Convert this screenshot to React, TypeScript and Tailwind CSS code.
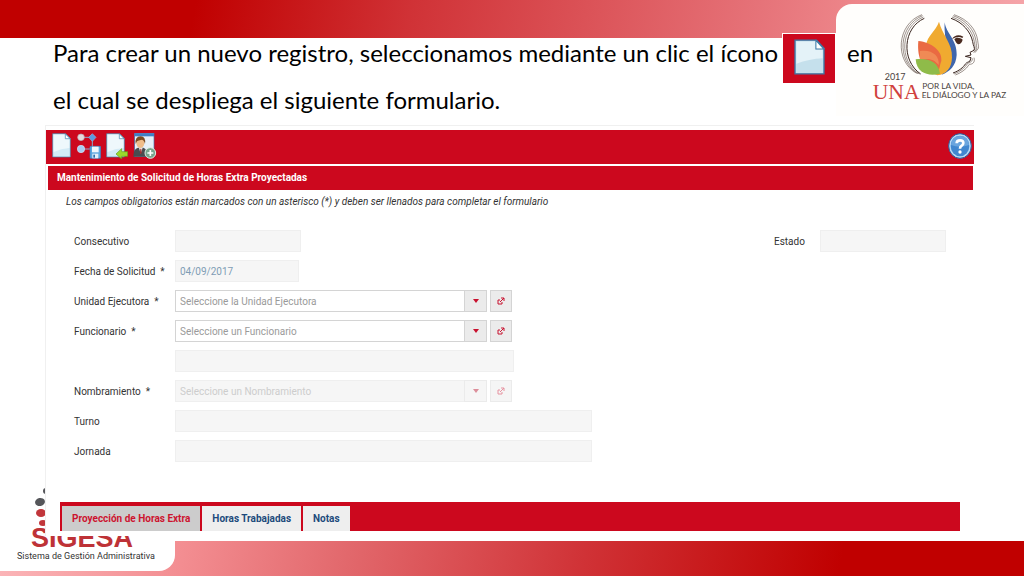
import React, { useState } from "react";

const tabs = ["Proyección de Horas Extra", "Horas Trabajadas", "Notas"];

const fieldClass =
  "h-[22px] border border-[#efefef] bg-[#f6f6f6] px-1 text-[10px] text-[#7f9db5] outline-none";

const PageShape = () => (
  <>
    <path d="M1 1 H40 L54 15 V71 H1 Z" fill="#d3ebf6" stroke="#4384ab" strokeWidth="2" />
    <path d="M4 4 H38 V18 H51 V44 Q26 46 4 56 Z" fill="#eef8fc" />
    <path d="M39 2 L53 16 H39 Z" fill="#ffffff" stroke="#4384ab" strokeWidth="2" />
  </>
);

const PageIcon = () => (
  <svg viewBox="-1 -1 60 78" className="h-[26px] w-5" aria-hidden="true">
    <PageShape />
  </svg>
);

const NodesIcon = () => (
  <svg viewBox="0 0 72 78" className="h-[26px] w-6" aria-hidden="true">
    <path d="M12 13 H46 V48 H12" fill="none" stroke="#8fa9c9" strokeWidth="3" />
    <circle cx="12" cy="13" r="10" fill="#e6dadd" stroke="#b9a9b4" strokeWidth="2" />
    <path d="M46 2 L57 13 L46 25 L35 13 Z" fill="#5c9be0" stroke="#8ab9e8" strokeWidth="2" />
    <circle cx="12" cy="48" r="11" fill="#a9cdf3" stroke="#d3e3f5" strokeWidth="2" />
    <rect x="39" y="40" width="32" height="36" rx="2" fill="#5ba6de" stroke="#3b7fbd" strokeWidth="2" />
    <rect x="45" y="41" width="20" height="17" fill="#f1f7fc" />
    <rect x="46" y="62" width="18" height="14" fill="#e2eff9" />
    <rect x="49" y="65" width="5" height="9" fill="#2b6cab" />
  </svg>
);

const PageBackIcon = () => (
  <svg viewBox="-1 -1 66 78" className="h-[26px] w-[22px]" aria-hidden="true">
    <PageShape />
    <path
      d="M29 62 L46 46 V55 H64 V69 H46 V77 Z"
      fill="#9bd92c"
      stroke="#5f9f18"
      strokeWidth="2"
    />
  </svg>
);

const PersonIcon = () => (
  <svg viewBox="0 0 72 78" className="h-[26px] w-6" aria-hidden="true">
    <rect x="5" y="1" width="58" height="70" fill="#e7f0f8" stroke="#3c76b5" strokeWidth="2" />
    <rect x="5" y="1" width="58" height="9" fill="#3f7fc6" />
    <path d="M1 71 Q1 47 15 44 L31 44 Q43 47 43 71 Z" fill="#4a4c50" />
    <path d="M18 44 L23 62 L29 44 Z" fill="#f4f4f4" />
    <path d="M22 47 H25 L26 60 L23 64 L21 60 Z" fill="#9b2c2c" />
    <ellipse cx="22" cy="30" rx="12" ry="15" fill="#f0bd8a" />
    <path d="M8 33 Q5 10 23 10 Q39 10 36 33 Q34 22 27 20 Q15 22 12 25 Z" fill="#7d4c22" />
    <circle cx="52" cy="60" r="16" fill="#77a58c" stroke="#dfeee5" strokeWidth="3" />
    <path d="M52 51 V69 M43 60 H61" stroke="#ffffff" strokeWidth="5" />
  </svg>
);

const HelpIcon = () => (
  <svg viewBox="0 0 72 78" className="h-[26px] w-6" aria-hidden="true">
    <ellipse cx="36" cy="39" rx="34" ry="37" fill="#b9d9f3" stroke="#245c9e" strokeWidth="3" />
    <ellipse cx="36" cy="39" rx="28" ry="31" fill="#4187cf" />
    <path d="M9 36 Q10 9 36 9 Q62 9 63 36 Q36 46 9 36 Z" fill="#6aa5de" />
    <path
      d="M26 31 Q26 22 36 22 Q46 22 46 30 Q46 36 40 39 Q36 41 36 47"
      fill="none"
      stroke="#ffffff"
      strokeWidth="8"
    />
    <circle cx="36" cy="57" r="5" fill="#ffffff" />
  </svg>
);

const UnaLogo = () => (
  <svg viewBox="0 0 435 300" className="h-[100px] w-[145px]" role="img" aria-label="UNA 2017">
    <g fill="none" stroke="#6b5c55" strokeWidth="2">
      <path d="M156 29 C80 56 72 168 140 205" />
      <path d="M158 32 C86 60 78 168 144 206" />
      <path d="M160 36 C92 64 84 168 148 207" />
      <path d="M163 40 C99 68 92 166 152 207" stroke="#3a2620" strokeWidth="3" />
    </g>
    <g fill="none" stroke="#6b5c55" strokeWidth="2">
      <path d="M252 29 C296 44 318 74 323 106 C324 118 327 124 325 130 L315 143" />
      <path d="M249 32 C290 46 313 76 318 108 C319 120 321 126 320 132 L311 143" />
      <path d="M246 36 C284 49 308 78 313 110 C314 120 317 126 314 136" />
      <path
        d="M243 40 C278 52 302 80 308 110 C309 122 316 128 312 136 L300 142 L303 150 L286 154 L303 158 L300 168"
        stroke="#3a2620"
        strokeWidth="3"
      />
      <path d="M312 158 C316 172 308 178 298 178 C288 194 272 204 256 210" />
      <path d="M307 160 C308 168 302 173 294 174 C285 189 270 200 252 207" />
      <path d="M300 168 C294 172 290 172 287 176 C279 188 268 197 249 204" stroke="#3a2620" strokeWidth="3" />
    </g>
    <path d="M224 52 C228 85 262 105 260 150 C258 182 240 200 215 209 C250 160 220 110 224 52 Z" fill="#3f66ac" />
    <path d="M207 50 C216 88 248 115 246 158 C245 188 230 207 202 211 C176 200 165 165 168 122 C171 92 198 78 207 50 Z" fill="#f0aa30" />
    <path d="M145 108 C185 112 218 138 214 168 C208 182 212 192 196 208 C160 200 140 160 145 108 Z" fill="#ea6a42" />
    <path d="M150 138 C185 132 210 152 206 180 C190 160 170 160 150 165 Z" fill="#f08a55" />
    <path d="M137 163 C170 158 205 168 210 206 C180 214 140 208 137 163 Z" fill="#8fbb49" />
    <path d="M246 102 C254 90 266 88 280 95 L277 99 C268 94 258 96 246 102 Z" fill="#4a2b20" />
    <path d="M253 103 C260 96 270 98 278 104 C276 112 272 118 264 118 C258 114 256 108 253 103 Z" fill="#4a2b20" />
    <text x="44" y="224" fontSize="27" fill="#4b4340" className="font-[Lato,sans-serif]">2017</text>
    <text x="8" y="281" fontSize="65" fill="#d0413c" className="font-['Liberation_Serif',serif]">UNA</text>
    <text x="157" y="252" fontSize="25" fill="#4b4340" className="font-[Lato,sans-serif]">POR LA VIDA,</text>
    <text x="155" y="279" fontSize="25" fill="#4b4340" className="font-[Lato,sans-serif]">EL DIÁLOGO Y LA PAZ</text>
  </svg>
);

const OpenButton = ({ label, disabled }: { label: string; disabled?: boolean }) => (
  <button
    type="button"
    aria-label={label}
    disabled={disabled}
    className="flex h-[22px] w-[22px] items-center justify-center border border-[#d4d4d4] bg-[#ebebeb] disabled:opacity-45"
  >
    <svg viewBox="0 0 8 8" className="h-2 w-2" fill="none" stroke="#c8102e" aria-hidden="true">
      <path d="M3 3 H1 V7 H5 V5" />
      <path d="M4 1 H7 V4 M7 1 L3 5" />
    </svg>
  </button>
);

interface ComboProps {
  id: string;
  placeholder: string;
  disabled?: boolean;
}

const Combo = ({ id, placeholder, disabled }: ComboProps) => (
  <div className="flex gap-[3px]">
    <div className="relative w-[312px]">
      <select
        id={id}
        disabled={disabled}
        className="block h-[22px] w-full appearance-none border border-[#d4d4d4] bg-white px-1 text-[10px] text-[#9a9a9a] outline-none disabled:border-[#efefef] disabled:bg-[#f6f6f6] disabled:text-[#cdcdcd] disabled:opacity-100"
      >
        <option>{placeholder}</option>
      </select>
      <span
        className={`pointer-events-none absolute inset-y-0 right-0 flex w-[23px] items-center justify-center border ${
          disabled ? "border-[#ebebeb] bg-[#f6f6f6]" : "border-[#d4d4d4] bg-[#ebebeb]"
        }`}
      >
        <svg viewBox="0 0 6 4" className="h-1 w-1.5" aria-hidden="true">
          <path d="M0 0 H6 L3 4 Z" fill={disabled ? "#dc8f9b" : "#c8102e"} />
        </svg>
      </span>
    </div>
    <OpenButton label={`Abrir ${id}`} disabled={disabled} />
  </div>
);

const Row = ({ id, label, children }: { id: string; label: string; children: React.ReactNode }) => (
  <div className="flex h-[22px] items-center">
    <label htmlFor={id} className="w-[101px] whitespace-pre text-[10px] text-[#333]">
      {label}
    </label>
    {children}
  </div>
);

const App: React.FC = () => {
  const [active, setActive] = useState(0);

  return (
    <div className="relative flex min-h-screen flex-col overflow-hidden bg-white font-[Roboto,sans-serif]">
      <div className="h-[38px] bg-[linear-gradient(100deg,#c00000_19%,#d03236_40%,#db5257_57%,#e67379_74%,#ee888c_84%,#f5a5a9_100%)]" />

      {/* Logo corner */}
      <div className="absolute right-0 top-1 h-[112px] w-[188px] rounded-tl-2xl bg-[#fffefc] pl-[34px] pt-px">
        <UnaLogo />
      </div>

      {/* SIGESA corner */}
      <div className="absolute bottom-[5px] left-0 w-[175px] rounded-br-2xl bg-white pb-[7px] pl-[17px]">
        <svg viewBox="0 0 40 40" className="mb-0.5 ml-3 h-10 w-10" aria-hidden="true">
          <ellipse cx="17" cy="5" rx="3" ry="3" fill="#55565a" />
          <ellipse cx="11" cy="16" rx="5" ry="4" transform="rotate(-12 11 16)" fill="#55565a" />
          <ellipse cx="12" cy="27" rx="5" ry="4" fill="#c1363b" />
          <ellipse cx="14" cy="37" rx="4" ry="3" fill="#c1363b" />
        </svg>
        <p className="ml-[14px] font-['Liberation_Sans',sans-serif] text-[27px] font-bold leading-5 text-[#be3237]">
          SIGESA
        </p>
        <p className="whitespace-nowrap text-[9px] leading-4 text-[#333]">
          Sistema de Gestión Administrativa
        </p>
      </div>

      {/* Instructions */}
      <div className="relative -mt-[9px] ml-[53px] font-[Lato,sans-serif] text-[24px] text-black">
        <div className="flex h-[47px] items-center whitespace-nowrap">
          <span>Para crear un nuevo registro, seleccionamos mediante un clic el ícono</span>
          <span className="ml-1 mt-3 flex h-[51px] w-[54px] shrink-0 items-center justify-center border border-white bg-[#cc081e]">
            <svg viewBox="-1 -1 92 106" className="mb-1 h-9 w-[31px]" aria-hidden="true">
              <path d="M2 2 H66 L88 26 V102 H2 Z" fill="#c5e0ec" stroke="#3a78a6" strokeWidth="4" />
              <path d="M6 6 H62 V30 H84 V56 Q44 58 6 72 Z" fill="#e4f2f8" />
              <path d="M64 3 V28 H87 Z" fill="#ffffff" stroke="#3a78a6" strokeWidth="3" />
            </svg>
          </span>
          <span className="ml-[11px]">en</span>
        </div>
        <p className="leading-[47px]">el cual se despliega el siguiente formulario.</p>
      </div>

      {/* Form panel */}
      <main className="relative ml-[45px] mr-[50px] mt-0.5 border-l border-t border-[#f0f0f0] bg-white pb-[5px] pt-1">
        <div className="flex h-[34px] items-start bg-[#cc081e] pl-1.5 pr-0.5 pt-[3px]">
          <div className="flex gap-[5px]">
            <button type="button" aria-label="Nuevo"><PageIcon /></button>
            <button type="button" aria-label="Guardar"><NodesIcon /></button>
            <button type="button" aria-label="Regresar"><PageBackIcon /></button>
            <button type="button" aria-label="Agregar persona"><PersonIcon /></button>
          </div>
          <button type="button" aria-label="Ayuda" className="ml-auto"><HelpIcon /></button>
        </div>
        <h1 className="ml-0.5 mr-px mt-0.5 bg-[#cc081e] pl-[9px] text-[10px] font-bold leading-6 text-white">
          Mantenimiento de Solicitud de Horas Extra Proyectadas
        </h1>
        <p className="ml-5 mt-1 text-[10px] italic leading-4 text-[#333]">
          Los campos obligatorios están marcados con un asterisco (*) y deben ser llenados para completar el formulario
        </p>

        <form className="ml-7 mr-7 mt-5 flex flex-col gap-2" onSubmit={(e) => e.preventDefault()}>
          <div className="flex justify-between">
            <Row id="consecutivo" label="Consecutivo">
              <input id="consecutivo" readOnly className={`w-[126px] ${fieldClass}`} />
            </Row>
            <div className="flex items-center">
              <label htmlFor="estado" className="w-[46px] text-[10px] text-[#333]">
                Estado
              </label>
              <input id="estado" readOnly className={`w-[126px] ${fieldClass}`} />
            </div>
          </div>
          <Row id="fecha" label="Fecha de Solicitud  *">
            <input id="fecha" readOnly defaultValue="04/09/2017" className={`w-[124px] ${fieldClass}`} />
          </Row>
          <Row id="unidad" label="Unidad Ejecutora  *">
            <Combo id="unidad" placeholder="Seleccione la Unidad Ejecutora" />
          </Row>
          <Row id="funcionario" label="Funcionario  *">
            <Combo id="funcionario" placeholder="Seleccione un Funcionario" />
          </Row>
          <input aria-label="Nombre del funcionario" readOnly className={`ml-[101px] w-[339px] ${fieldClass}`} />
          <Row id="nombramiento" label="Nombramiento  *">
            <Combo id="nombramiento" placeholder="Seleccione un Nombramiento" disabled />
          </Row>
          <Row id="turno" label="Turno">
            <input id="turno" readOnly className={`w-[417px] ${fieldClass}`} />
          </Row>
          <Row id="jornada" label="Jornada">
            <input id="jornada" readOnly className={`w-[417px] ${fieldClass}`} />
          </Row>
        </form>

        <div role="tablist" className="ml-3.5 mr-3.5 mt-10 flex h-[29px] gap-0.5 bg-[#cc081e] pl-0.5 pt-1">
          {tabs.map((tab, i) => (
            <button
              key={tab}
              type="button"
              role="tab"
              aria-selected={active === i}
              onClick={() => setActive(i)}
              className={`px-2.5 text-[10px] font-bold ${
                active === i ? "bg-[#cccccc] text-[#cc1430]" : "bg-[#eeeeee] text-[#1c4a7c]"
              }`}
            >
              {tab}
            </button>
          ))}
        </div>
      </main>

      <div className="mt-auto h-[35px] bg-[linear-gradient(100deg,#fbb5b8_0%,#f38d91_18%,#e2686c_34%,#d03236_57%,#c00000_82%)]" />
    </div>
  );
};

export default App;
